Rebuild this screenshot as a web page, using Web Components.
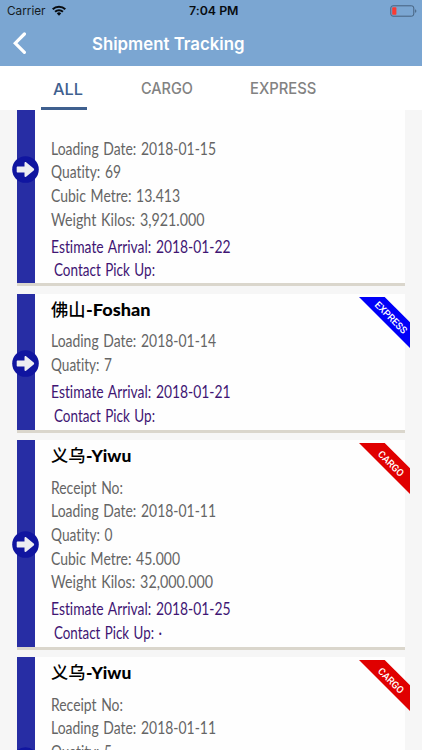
<!DOCTYPE html>
<html lang="en">
<head>
<meta charset="utf-8">
<title>Shipment Tracking</title>
<style>
body { margin: 0; width: 422px; height: 750px; overflow: hidden; background: #f6f6f6; font-family: Inter, "Noto Sans CJK SC", sans-serif; }
</style>
</head>
<body>
<shipment-app></shipment-app>
<script>
const esc = s => s.replace(/&/g, '&amp;').replace(/</g, '&lt;');

/* One line of text set to an exact measure. */
class FitText extends HTMLElement {
  connectedCallback() {
    const a = n => this.getAttribute(n);
    const root = this.attachShadow({ mode: 'open' });
    root.innerHTML = `<style>:host{display:block;flex:none}svg{display:block;overflow:visible}text{fill:currentColor;white-space:pre;font-variant-ligatures:none}</style>
      <svg width="${a('w')}" height="${a('h')}"><text x="0" y="${a('base')}" textLength="${a('w')}" lengthAdjust="spacingAndGlyphs">${esc(a('text'))}</text></svg>`;
  }
}
customElements.define('fit-text', FitText);

class StatusBar extends HTMLElement {
  connectedCallback() {
    this.attachShadow({ mode: 'open' }).innerHTML = `<style>
      :host{display:grid;grid-template-columns:182px 1fr 27px;height:22px;padding:0 5px 0 7px;color:#151b22}
      .left{display:flex;gap:6px}
      .carrier{font-size:12px}.time{font-size:12px;font-weight:600;color:#080c10}
      svg{display:block}
      .wifi{margin-top:4.5px}.battery{margin-top:4.5px}
    </style>
    <div class="left"><fit-text class="carrier" text="Carrier" w="38.5" h="22" base="15.3"></fit-text>
      <svg class="wifi" width="14" height="11" viewBox="0 0 14 11"><g fill="none" stroke="#080c10" stroke-width="2"><path d="M.7 4.3a8.9 8.9 0 0 1 12.6 0"/><path d="M3.1 6.8a5.5 5.5 0 0 1 7.8 0"/></g><path d="M4.8 8.4a3.1 3.1 0 0 1 4.4 0L7 10.7z" fill="#080c10"/></svg></div>
    <fit-text class="time" text="7:04 PM" w="49.5" h="22" base="15.3"></fit-text>
    <svg class="battery" width="27" height="12" viewBox="0 0 27 12"><rect x=".8" y=".8" width="23" height="10.4" rx="2.2" fill="none" stroke="#46627f" stroke-width="1"/><rect x="2.2" y="2.3" width="4.2" height="7.4" rx=".6" fill="#fb3b32"/><path d="M25.2 4.2c1.5.5 1.5 3.1 0 3.6z" fill="#46627f"/></svg>`;
  }
}
customElements.define('status-bar', StatusBar);

class NavBar extends HTMLElement {
  connectedCallback() {
    this.attachShadow({ mode: 'open' }).innerHTML = `<style>
      :host{display:flex;height:43.5px;padding-left:13px;gap:66px;color:#fff;font-size:17px;font-weight:600}
      svg{display:block;margin-top:10px}
    </style>
    <svg width="13" height="23" viewBox="0 0 13 23"><path d="M11.4 2 2.2 11.2l9.2 9.2" fill="none" stroke="#fff" stroke-width="3.2" stroke-linecap="round" stroke-linejoin="miter"/></svg>
    <fit-text text="Shipment Tracking" w="152.5" h="43" base="27.6"></fit-text>`;
  }
}
customElements.define('nav-bar', NavBar);

class TabBar extends HTMLElement {
  connectedCallback() {
    this.attachShadow({ mode: 'open' }).innerHTML = `<style>
      :host{display:flex;height:44.7px;padding-left:41px;background:#fff;color:#828282;font-size:15.5px;font-weight:500}
      .tab{box-sizing:border-box;height:44.7px}
      .on{width:46px;padding-left:12px;border-bottom:3.2px solid #3f608f;color:#3f608f;font-size:16.5px}
      .cargo{margin-left:53.5px;width:52px}.express{margin-left:57px}
    </style>
    <div class="tab on"><fit-text text="ALL" w="30" h="40" base="28.5"></fit-text></div>
    <div class="tab cargo"><fit-text text="CARGO" w="52" h="40" base="28.3"></fit-text></div>
    <div class="tab express"><fit-text text="EXPRESS" w="66.3" h="40" base="28.3"></fit-text></div>`;
  }
}
customElements.define('tab-bar', TabBar);

class CornerRibbon extends HTMLElement {
  connectedCallback() {
    const kind = this.getAttribute('kind');
    const fill = kind === 'EXPRESS' ? '#0000f8' : '#e00000';
    const len = kind === 'EXPRESS' ? 41 : 32;
    this.attachShadow({ mode: 'open' }).innerHTML = `<style>:host{display:block}svg{display:block}
      text{font:500 9.8px Roboto,sans-serif;fill:#fff}</style>
      <svg width="51" height="51" viewBox="0 0 51 51"><path d="M0 0h25.7L51 25.3V51z" fill="${fill}"/>
      <text transform="translate(32 20.6) rotate(45)" text-anchor="middle" y="3.4" textLength="${len}" lengthAdjust="spacingAndGlyphs">${kind}</text></svg>`;
  }
}
customElements.define('corner-ribbon', CornerRibbon);

class ShipmentCard extends HTMLElement {
  set data(d) {
    const row = ([t, w]) => `<fit-text text="${t}" w="${w}" h="23.6" base="17.2"></fit-text>`;
    this.attachShadow({ mode: 'open' }).innerHTML = `<style>
      :host{display:flex;position:relative;box-sizing:border-box;flex:none;width:388.6px;height:${d.height}px;background:#fefefe}
      :host::after{content:"";position:absolute;left:0;right:0;bottom:0;height:2.8px;background:#dad6cc}
      .rail{width:18px;background:#272da4;flex:none}
      .node{position:absolute;left:-4.3px;top:calc(50% - 13.7px);width:27px;height:27px}
      .body{padding-left:16.8px;font-family:Lato,sans-serif;font-size:17.6px;color:#656565;word-spacing:1.4px}
      .title{display:flex;height:36.5px;color:#000;font-weight:900;font-size:17.3px}
      .cjk{font-family:"Noto Sans CJK SC",sans-serif;font-weight:500;font-size:17px}
      .eta{margin-top:3.5px;color:#401573}
      .contact{padding-left:3px}
      corner-ribbon{position:absolute;right:-4.7px;top:3px}
    </style>
    <div class="rail"></div>
    <svg class="node" viewBox="0 0 27 27"><circle cx="13.5" cy="13.5" r="13.3" fill="#1015a0"/><path d="M5.7 10.5h6.8V7.2c0-1.2 1-1.6 1.9-.8l7.3 6.2c.6.5.6 1.3 0 1.8l-7.3 6.2c-.9.8-1.9.4-1.9-.8v-3.3H5.7c-.6 0-1-.4-1-1v-4c0-.6.4-1 1-1z" fill="#ededf2"/></svg>
    <div class="body">
      <div class="title" style="height:${d.titleHeight || 36.5}px">${d.city ? `<fit-text class="cjk" text="${d.cjk}" w="34.5" h="30" base="22"></fit-text><fit-text text="${d.city}" w="${d.cityW}" h="30" base="21.8"></fit-text>` : ''}</div>
      ${d.rows.map(row).join('')}
      ${d.eta ? `<div class="eta">${row(d.eta)}<div class="contact">${row(d.dot ? ['Contact Pick Up: ·', 108] : ['Contact Pick Up:', 101])}</div></div>` : ''}
    </div>
    ${d.kind ? `<corner-ribbon kind="${d.kind}"></corner-ribbon>` : ''}`;
  }
}
customElements.define('shipment-card', ShipmentCard);

class ShipmentApp extends HTMLElement {
  connectedCallback() {
    const root = this.attachShadow({ mode: 'open' });
    root.innerHTML = `<style>
      :host{display:flex;flex-direction:column;width:422px;height:750px;overflow:hidden;background:#f6f6f6}
      header{background:#7ba6d2;height:65.5px;flex:none}
      tab-bar{flex:none}
      main{flex:1;min-height:0;overflow:hidden}
      .list{display:flex;flex-direction:column;gap:7.7px;margin-top:-56.5px;padding-left:16.7px}
    </style>
    <header><status-bar></status-bar><nav-bar></nav-bar></header><tab-bar></tab-bar><main><div class="list"></div></main>`;
    const list = root.querySelector('.list');
    const shipments = [
      { height: 232.6, titleHeight: 84.1, rows: [['Loading Date: 2018-01-15', 165], ['Quatity: 69', 70], ['Cubic Metre: 13.413', 129], ['Weight Kilos: 3,921.000', 153.5]], eta: ['Estimate Arrival: 2018-01-22', 179.5] },
      { height: 138.6, cjk: '佛山', city: '-Foshan', cityW: 64.5, kind: 'EXPRESS', rows: [['Loading Date: 2018-01-14', 165], ['Quatity: 7', 61]], eta: ['Estimate Arrival: 2018-01-21', 179.5] },
      { height: 209.3, cjk: '义乌', city: '-Yiwu', cityW: 45.3, kind: 'CARGO', dot: true, rows: [['Receipt No:', 72], ['Loading Date: 2018-01-11', 165], ['Quatity: 0', 61.5], ['Cubic Metre: 45.000', 129], ['Weight Kilos: 32,000.000', 162]], eta: ['Estimate Arrival: 2018-01-25', 179.5] },
      { height: 207, cjk: '义乌', city: '-Yiwu', cityW: 45.3, kind: 'CARGO', rows: [['Receipt No:', 72], ['Loading Date: 2018-01-11', 165], ['Quatity: 5', 61]] }
    ];
    for (const s of shipments) {
      const card = document.createElement('shipment-card');
      card.data = s;
      list.append(card);
    }
  }
}
customElements.define('shipment-app', ShipmentApp);
</script>
</body>
</html>
